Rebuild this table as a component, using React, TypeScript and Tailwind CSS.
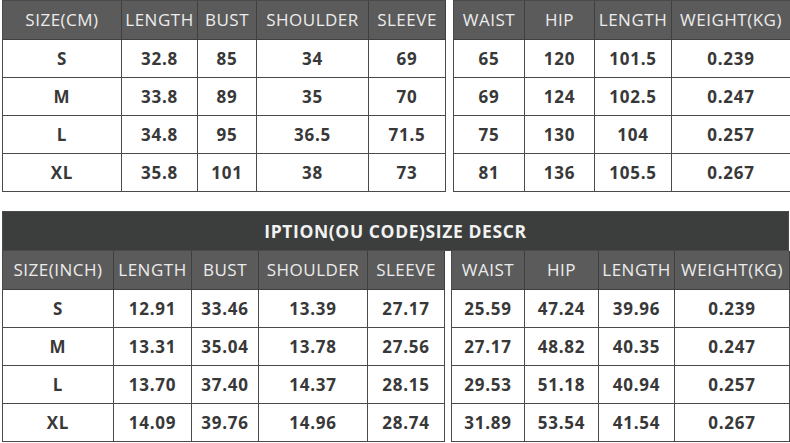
import React from 'react';

type Half = {
  widths: number[];
  head: string[];
  rows: string[][];
};

const cmLeft: Half = {
  widths: [119, 76, 59, 112, 77],
  head: ['SIZE(CM)', 'LENGTH', 'BUST', 'SHOULDER', 'SLEEVE'],
  rows: [
    ['S', '32.8', '85', '34', '69'],
    ['M', '33.8', '89', '35', '70'],
    ['L', '34.8', '95', '36.5', '71.5'],
    ['XL', '35.8', '101', '38', '73'],
  ],
};

const cmRight: Half = {
  widths: [71, 70, 77, 119],
  head: ['WAIST', 'HIP', 'LENGTH', 'WEIGHT(KG)'],
  rows: [
    ['65', '120', '101.5', '0.239'],
    ['69', '124', '102.5', '0.247'],
    ['75', '130', '104', '0.257'],
    ['81', '136', '105.5', '0.267'],
  ],
};

const inchLeft: Half = {
  widths: [111, 78, 67, 109, 77],
  head: ['SIZE(INCH)', 'LENGTH', 'BUST', 'SHOULDER', 'SLEEVE'],
  rows: [
    ['S', '12.91', '33.46', '13.39', '27.17'],
    ['M', '13.31', '35.04', '13.78', '27.56'],
    ['L', '13.70', '37.40', '14.37', '28.15'],
    ['XL', '14.09', '39.76', '14.96', '28.74'],
  ],
};

const inchRight: Half = {
  widths: [73, 74, 76, 115],
  head: ['WAIST', 'HIP', 'LENGTH', 'WEIGHT(KG)'],
  rows: [
    ['25.59', '47.24', '39.96', '0.239'],
    ['27.17', '48.82', '40.35', '0.247'],
    ['29.53', '51.18', '40.94', '0.257'],
    ['31.89', '53.54', '41.54', '0.267'],
  ],
};

function HalfTable({ half, withTop }: { half: Half; withTop: boolean }) {
  return (
    <div className={`flex flex-col border-l border-[#4a4a4a] ${withTop ? 'border-t' : ''}`}>
      <div className="flex h-[39px] bg-[#5b5b5b]">
        {half.head.map((h, i) => (
          <div
            key={i}
            style={{ width: half.widths[i] }}
            className="flex items-center justify-center border-r border-b border-[#3f3f3f] text-[17px] text-[#ececec] tracking-[0.5px] whitespace-nowrap"
          >
            {h}
          </div>
        ))}
      </div>
      {half.rows.map((row, r) => (
        <div key={r} className="flex h-[38px] bg-white">
          {row.map((c, i) => (
            <div
              key={i}
              style={{ width: half.widths[i] }}
              className="flex items-center justify-center border-r border-b border-[#4a4a4a] text-[17px] font-bold text-[#383838] tracking-[0.8px]"
            >
              {c}
            </div>
          ))}
        </div>
      ))}
    </div>
  );
}

export default function App() {
  return (
    <div
      className="w-[790px] h-[443px] overflow-hidden bg-white"
      style={{ fontFamily: '"Open Sans", "Liberation Sans", sans-serif' }}
    >
      <div className="flex pl-[2px] gap-[7px]">
        <HalfTable half={cmLeft} withTop />
        <HalfTable half={cmRight} withTop />
      </div>

      <div className="mt-[19px] ml-[2px] w-[787px]">
        <div className="flex h-[40px] items-center justify-center border border-[#4a4a4a] bg-[#3c3e3d] text-[17.5px] font-bold text-[#f2f2f2] tracking-[0.6px]">
          IPTION(OU CODE)SIZE DESCR
        </div>
        <div className="flex gap-[6px]">
          <HalfTable half={inchLeft} withTop={false} />
          <HalfTable half={inchRight} withTop={false} />
        </div>
      </div>
    </div>
  );
}
